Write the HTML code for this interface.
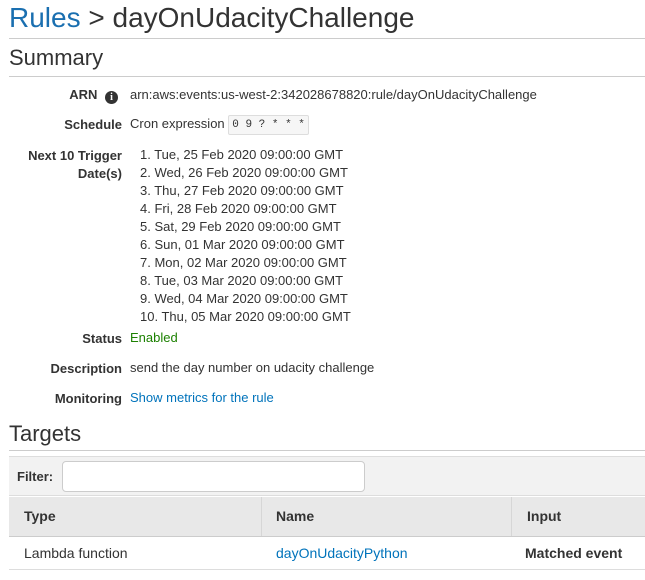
<!DOCTYPE html>
<html><head><meta charset="utf-8"><style>
body{margin:0;width:645px;height:580px;background:#fff;font-family:"Liberation Sans",Arial,sans-serif;color:#333;position:relative;overflow:hidden}
.a{position:absolute;white-space:nowrap}
.l{position:absolute;right:523px;font-weight:bold;font-size:13px;text-align:right;color:#333}
.v{position:absolute;left:130px;font-size:13px;color:#333;white-space:nowrap}
.hr{position:absolute;left:9px;right:0;height:1px;background:#ccc}
.d{position:absolute;left:140px;font-size:13px;white-space:nowrap}
a{color:#0073bb;text-decoration:none}
</style></head><body>
<div class="a" style="left:9px;top:2px;font-size:28px;color:#333"><span style="color:#1a6fb0">Rules</span> &gt; dayOnUdacityChallenge</div>
<div class="hr" style="top:38px"></div>
<div class="a" style="left:9px;top:45px;font-size:22px">Summary</div>
<div class="hr" style="top:76px"></div>

<div class="l" style="top:87px;right:527px">ARN <span style="display:inline-block;width:13px;height:13px;border-radius:50%;background:#333;color:#fff;font-size:10px;line-height:13px;text-align:center;vertical-align:-1px;margin-left:4px;font-family:'Liberation Serif',serif">i</span></div>
<div class="v" style="top:87px">arn:aws:events:us-west-2:342028678820:rule/dayOnUdacityChallenge</div>

<div class="l" style="top:117px">Schedule</div>
<div class="v" style="top:114px;line-height:20px">Cron expression <span style="display:inline-block;border:1px solid #ddd;background:#f6f6f6;border-radius:2px;font-family:'Liberation Mono',monospace;font-size:11px;padding:2px 3px;line-height:14px;vertical-align:middle">0 9 ? * * *</span></div>

<div class="l" style="top:147px;line-height:18px">Next 10 Trigger<br>Date(s)</div>
<div class="d" style="top:146px;line-height:18px;left:140px">
1. Tue, 25 Feb 2020 09:00:00 GMT<br>
2. Wed, 26 Feb 2020 09:00:00 GMT<br>
3. Thu, 27 Feb 2020 09:00:00 GMT<br>
4. Fri, 28 Feb 2020 09:00:00 GMT<br>
5. Sat, 29 Feb 2020 09:00:00 GMT<br>
6. Sun, 01 Mar 2020 09:00:00 GMT<br>
7. Mon, 02 Mar 2020 09:00:00 GMT<br>
8. Tue, 03 Mar 2020 09:00:00 GMT<br>
9. Wed, 04 Mar 2020 09:00:00 GMT<br>
10. Thu, 05 Mar 2020 09:00:00 GMT</div>

<div class="l" style="top:331px">Status</div>
<div class="v" style="top:330px;color:#1d8102">Enabled</div>
<div class="l" style="top:361px">Description</div>
<div class="v" style="top:360px">send the day number on udacity challenge</div>
<div class="l" style="top:391px">Monitoring</div>
<div class="v" style="top:390px"><a>Show metrics for the rule</a></div>

<div class="a" style="left:9px;top:421px;font-size:22px">Targets</div>
<div class="hr" style="top:450px"></div>
<div class="a" style="left:9px;top:456px;width:636px;height:40px;background:#f2f2f2;border-top:1px solid #ddd;border-bottom:1px solid #ddd;box-sizing:border-box"></div>
<div class="a" style="left:17px;top:469px;font-size:13px;font-weight:bold">Filter:</div>
<div class="a" style="left:62px;top:461px;width:301px;height:29px;background:#fff;border:1px solid #ccc;border-radius:4px"></div>
<div class="a" style="left:9px;top:497px;width:636px;height:39px;background:#e8e8e8;border-bottom:1px solid #ccc"></div>
<div class="a" style="left:261px;top:497px;width:1px;height:39px;background:#d6d6d6"></div>
<div class="a" style="left:511px;top:497px;width:1px;height:39px;background:#d6d6d6"></div>
<div class="a" style="left:24px;top:508px;font-size:14px;font-weight:bold">Type</div>
<div class="a" style="left:276px;top:508px;font-size:14px;font-weight:bold">Name</div>
<div class="a" style="left:527px;top:508px;font-size:14px;font-weight:bold">Input</div>
<div class="a" style="left:24px;top:545px;font-size:14px">Lambda function</div>
<div class="a" style="left:276px;top:545px;font-size:14px"><a>dayOnUdacityPython</a></div>
<div class="a" style="left:525px;top:545px;font-size:14px;font-weight:bold">Matched event</div>
<div class="hr" style="top:569px;background:#ddd"></div>
</body></html>
